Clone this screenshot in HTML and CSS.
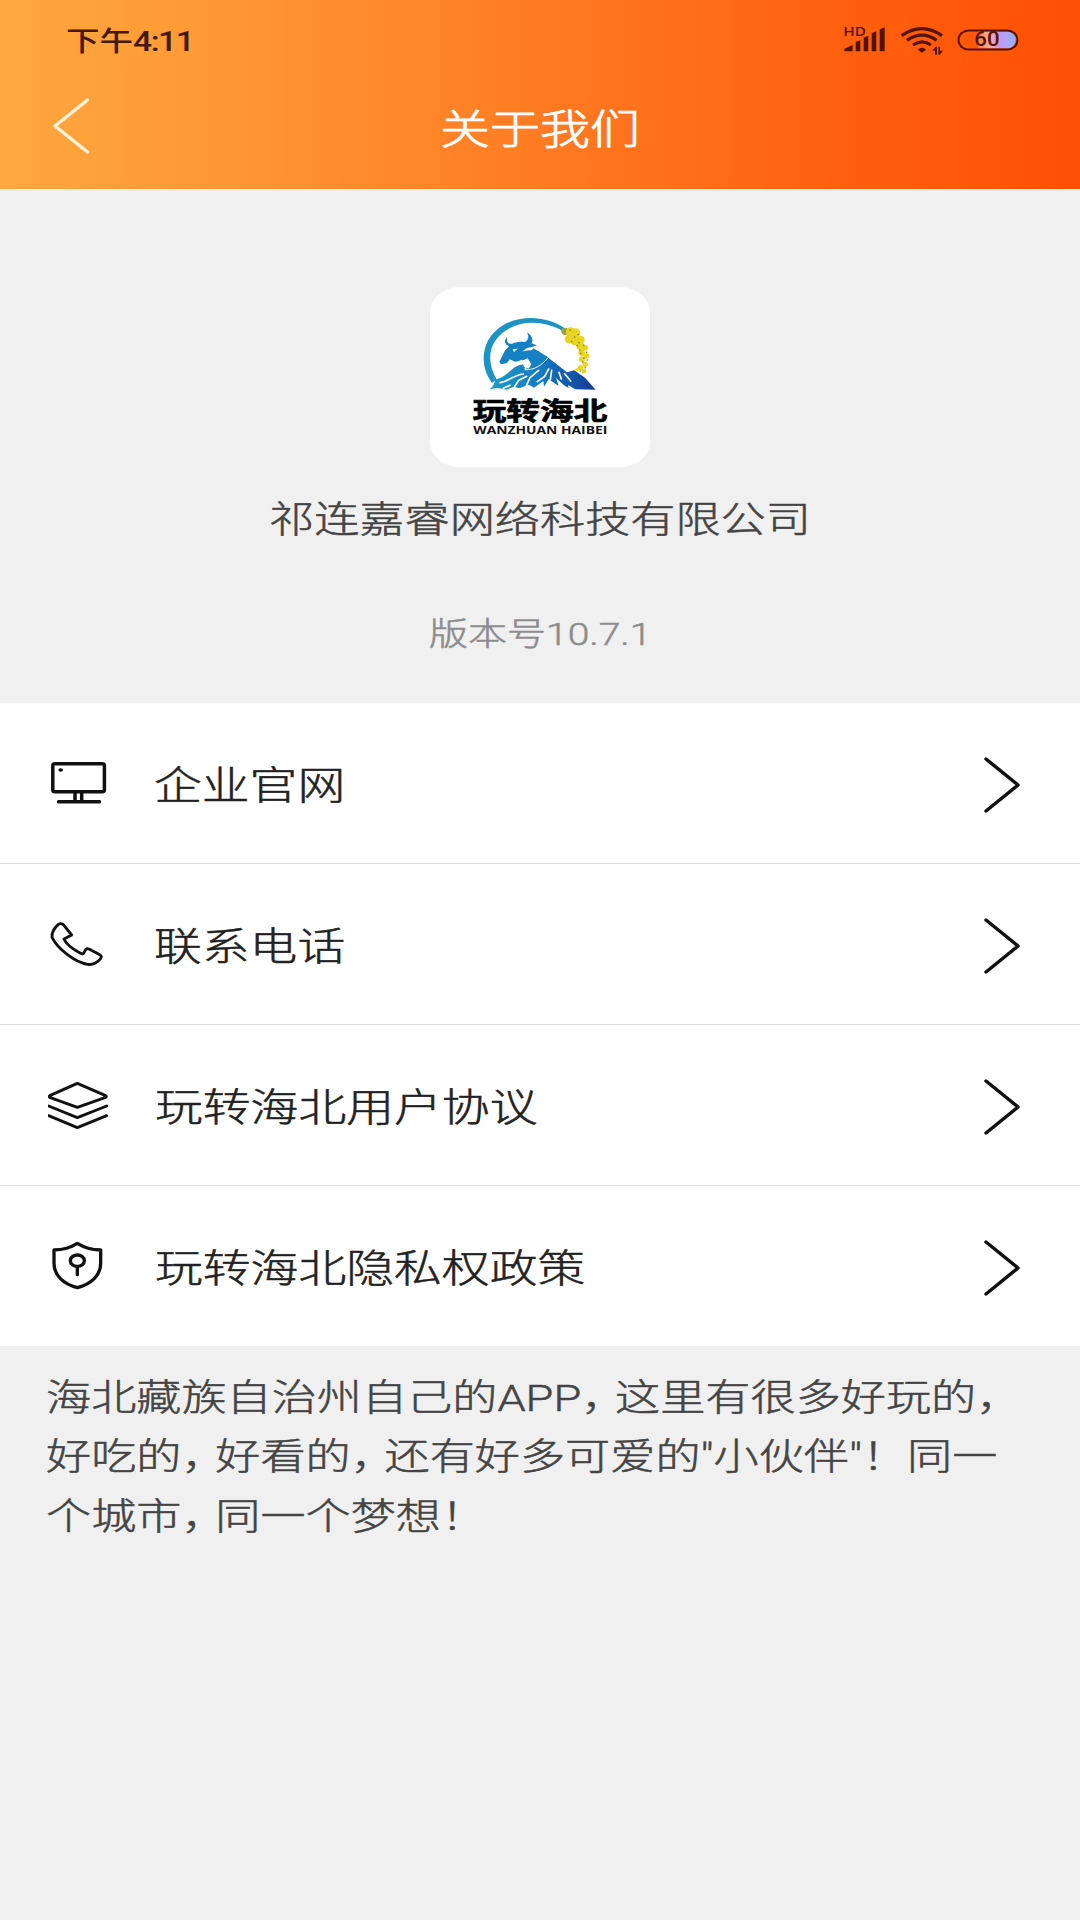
FILE: index.html
```html
<!DOCTYPE html>
<html lang="zh-CN">
<head>
<meta charset="utf-8">
<title>关于我们</title>
<link rel="stylesheet" href="styles.css">
</head>
<body>
<header class="header">
  <div class="status">
    <span class="wide time">下午<span class="clock">4:11</span></span>
    <svg class="status-icons" viewBox="130 58 530 130">
      <text class="hd" x="131" y="108" textLength="68" lengthAdjust="spacingAndGlyphs">HD</text>
      <path class="ink" d="M134 155v-8l25-11v19zM168 155v-28l14-5v33zM192 155v-41l14-6v47zM216 155v-54l14-6v60zM240 155v-66l15-6v72z"/>
      <g class="waves">
        <path d="M306 108q60-42 121 0"/>
        <path d="M322 122q44-31 89 0"/>
        <path d="M340 136q27-19 54 0"/>
      </g>
      <path class="ink" d="M354 150q13-12 26 0l-13 9zM398 153l10-12h4v24h-6v-12zM416 141h5v12h9l-9 12h-5z"/>
      <defs>
        <linearGradient id="charge">
          <stop offset="0" stop-color="#ff7d3a"/>
          <stop offset=".3" stop-color="#f7aaa2"/>
          <stop offset=".6" stop-color="#c39af0"/>
          <stop offset="1" stop-color="#8fb4ff"/>
        </linearGradient>
      </defs>
      <path fill="url(#charge)" d="M535 96h88a24 24 0 0 1 0 50h-88z"/>
      <rect class="shell" x="476.500" y="92.500" width="177" height="57" rx="30"/>
      <text class="level" x="524" y="140" textLength="76" lengthAdjust="spacingAndGlyphs">60</text>
    </svg>
  </div>
  <div class="nav">
    <svg class="back" viewBox="0 0 40 60"><path d="M35.500 4 3 30 35.500 56"/></svg>
    <h1 class="wide title">关于我们</h1>
  </div>
</header>

<section class="about">
  <svg class="logo" viewBox="30 22 660 540">
    <defs>
      <linearGradient id="sky" x1="0" x2="1">
        <stop offset="0" stop-color="#1f9cc4"/>
        <stop offset=".5" stop-color="#1478c2"/>
        <stop offset="1" stop-color="#123a94"/>
      </linearGradient>
    </defs>
    <path fill="#1e94c4" d="M216 310C176 256 186 187 232 149c55-46 142-43 200-5l-5 9c-57-31-129-34-179 6-44 36-48 88-18 140z"/>
    <path fill="#1681c2" d="M261 171c-2 17 3 23 15 21 13-6 28-6 37-5 14-5 14-17 8-29 17 12 19 23 14 33l15 6c-9 4-20 7-29 8l-15 11c19-5 34-6 49-1 14 17 25 18 31 20l-24 29-21 12-20 7c2-16-4-30-15-43-6 1-13 6-21 6l-16-7-8 11-18 4-5-8 18-35 11-11c-13-5-16-17-6-29z"/>
    <path fill="#1681c2" d="M340 206l44 26-32 34-38 14 14-22-6-28z"/>
    <path fill="url(#sky)" d="M208 329c12-7 16-20 18-30 22-3 38-20 58-36 14-8 26-11 32-9 1 7-3 12-2 14 28-4 44-14 71-34l56 44 22-6 32 22 32 36-61-1-22-13 2 9-14-8-24-22 8 24-30-20-14 22-2-17-28 20-16-9-28 11-16-5-22 9-28-5z"/>
    <path class="snow" d="M240 309c28-4 38-22 70-26M250 326l20-9M282 324l14-22 24-12M318 320l12-26 26-22M352 306l22-16 12-22M391 300l4-28M424 298l-7-20M452 304l-18-22"/>
    <path fill="#fff" d="M306 243l17-7 11 18-8 13-14-6zM278 209l15-2-11 10z"/>
    <path class="collar" d="M314 270c28 2 50-12 70-36"/>
    <g class="bloom">
      <circle cx="435" cy="155" r="11" fill="#97a53c"/>
      <circle cx="451" cy="156" r="13"/><circle cx="467" cy="160" r="14"/>
      <circle cx="447" cy="178" r="13"/><circle cx="465" cy="183" r="14"/>
      <circle cx="483" cy="180" r="11"/><circle cx="481" cy="199" r="12"/>
      <circle cx="495" cy="204" r="9"/><circle cx="485" cy="219" r="10"/>
      <circle cx="500" cy="229" r="8"/><circle cx="486" cy="239" r="9"/>
      <circle cx="496" cy="254" r="8"/><circle cx="482" cy="264" r="8"/>
      <circle cx="492" cy="274" r="7"/><circle cx="471" cy="270" r="5"/>
    </g>
    <path class="seeds" d="M449 150l3 3M462 171l4 2M475 188l4 3M490 196l3 3M481 222l4-2M499 216l2 4M487 246l3 3M497 263l-3 3M479 273l3 2M490 234l4 2M453 186l4-1M473 163l3 3M470 196l3 3M500 240l3 2M478 210l3 2"/>
    <text class="brand" x="158" y="420" textLength="404" lengthAdjust="spacingAndGlyphs">玩转海北</text>
    <text class="brand-latin" x="160" y="462" textLength="402" lengthAdjust="spacingAndGlyphs">WANZHUAN HAIBEI</text>
  </svg>
  <p class="wide company">祁连嘉睿网络科技有限公司</p>
  <p class="wide version">版本号10.7.1</p>
</section>

<nav class="menu">
  <a class="row">
    <svg class="icon" viewBox="0 0 60 60"><rect x="4.800" y="10.800" width="51.600" height="28" rx="2"/><path d="M27 40v8M33.700 40v8M10.500 48.700h41"/><ellipse class="dot" cx="12.700" cy="17" rx="2.300" ry="1.800"/></svg>
    <span class="wide label">企业官网</span>
    <svg class="chevron" viewBox="0 0 40 60"><path d="M4 4 36 30 4 56"/></svg>
  </a>
  <a class="row">
    <svg class="icon" viewBox="54 42 180 180"><path class="fine" d="M85 73q8-5 15 1l25 31-23 12c5 12 22 28 48 42 7 4 10 4 12-1l5-9q3-4 10-2l34 18q5 4 1 11-17 20-39 17C136 187 84 148 66 112q-2-20 19-39z"/></svg>
    <span class="wide label">联系电话</span>
    <svg class="chevron" viewBox="0 0 40 60"><path d="M4 4 36 30 4 56"/></svg>
  </a>
  <a class="row">
    <svg class="icon" viewBox="54 525 180 180"><path class="fine" d="M142 550 59 587q-3 3 0 5l83 30 85-30q4-2 0-5zM56 618l86 35 88-35M56 647l86 36 88-36"/></svg>
    <span class="wide label long">玩转海北用户协议</span>
    <svg class="chevron" viewBox="0 0 40 60"><path d="M4 4 36 30 4 56"/></svg>
  </a>
  <a class="row">
    <svg class="icon" viewBox="54 48 180 180"><path class="bold" d="M142 70q30 19 70 20v40c0 36-28 62-70 73-42-11-70-37-70-73V90q40-1 70-20zM142 140v24"/><ellipse class="bold" cx="142" cy="122" rx="21" ry="17"/></svg>
    <span class="wide label long">玩转海北隐私权政策</span>
    <svg class="chevron" viewBox="0 0 40 60"><path d="M4 4 36 30 4 56"/></svg>
  </a>
</nav>

<p class="wide intro">海北藏族自治州自己的APP<span class="comma">，</span>这里有很多好玩的<span class="comma">，</span><br>好吃的<span class="comma">，</span>好看的<span class="comma">，</span>还有好多可爱的"小伙伴"！同一<br>个城市<span class="comma">，</span>同一个梦想！</p>
</body>
</html>
```
FILE: styles.css
```css
* { box-sizing: border-box; }

body {
  margin: 0;
  min-height: 1920px;
  background: #f0f0f0;
  color: #222;
  font-family: Roboto, "Noto Sans CJK SC", sans-serif;
  font-weight: 300;
}

p, h1 { margin: 0; font-weight: inherit; }
svg { display: block; flex: none; }

/* Lettering is wider than it is tall throughout the interface */
.wide {
  transform: scaleX(1.22);
  transform-origin: left center;
  white-space: nowrap;
  -webkit-text-stroke: .5px currentColor;
}

.header {
  height: 189px;
  background: linear-gradient(90deg, #ffa840 0%, #ff9430 25%, #ff7b22 50%, #ff610f 77%, #ff5003 100%);
}

.status {
  height: 82px;
  padding: 0 60px 0 66px;
  display: flex;
  align-items: center;
  justify-content: space-between;
}

.time { margin-bottom: 4px; color: #431a04; font-size: 27.500px; font-weight: 500; -webkit-text-stroke: 0; }
.clock { letter-spacing: -1.200px; }
.status-icons { width: 176.660px; height: 43.330px; }
.ink, .hd, .level { fill: #541400; }
.hd { font: 600 36px "Open Sans", sans-serif; }
.level { font: 500 60px Roboto, sans-serif; }
.waves { fill: none; stroke: #541400; stroke-width: 10; }
.shell { fill: none; stroke: #541400; stroke-width: 6; }

.nav {
  height: 94px;
  padding: 0 52px;
  display: grid;
  grid-template-columns: 40px 1fr 40px;
  align-items: center;
}

.back { width: 40px; height: 60px; margin-top: -6px; }
.back path { fill: none; stroke: #fff3d8; stroke-width: 3.500; stroke-linecap: round; stroke-linejoin: round; }
.title { justify-self: center; margin-bottom: 7px; transform-origin: center; color: #fff; font-size: 41px; -webkit-text-stroke-width: .8px; }

.about {
  height: 514px;
  padding-top: 98px;
  display: flex;
  flex-direction: column;
  align-items: center;
}

.about .wide { transform-origin: center; }
.logo { width: 220px; height: 180px; border-radius: 30px / 25px; background: #fff; }
.brand { fill: #000; stroke: #000; stroke-width: 2; font: 700 76px "Noto Sans CJK SC", sans-serif; }
.brand-latin { fill: #111; font: 700 29px "Open Sans", sans-serif; }
.snow { fill: none; stroke: #fff; stroke-width: 5; stroke-linecap: round; }
.collar { fill: none; stroke: #fff; stroke-width: 3; }
.bloom { fill: #e9d51f; }
.seeds { stroke: #90811b; stroke-width: 4; }
.company { margin-top: 27px; color: #444; font-size: 37px; line-height: 54px; }
.version { margin-top: 62px; color: #8c8c8c; font-size: 32px; line-height: 48px; }

.menu { background: #fff; }

.row {
  height: 161px;
  padding: 0 58px 0 48px;
  display: flex;
  align-items: center;
  border-bottom: 1px solid #dedede;
}

.row:last-child { height: 160px; border-bottom: 0; }
.icon { width: 60px; height: 60px; fill: none; stroke: #111; stroke-width: 3.500; stroke-linecap: round; stroke-linejoin: round; }
.icon .fine { stroke-width: 8.500; }
.icon .bold { stroke-width: 10; }
.icon .dot { fill: #111; stroke: none; }
.label { margin: 5px 0 0 46px; font-size: 39.200px; line-height: 58px; }
.long { margin-left: 47px; }
.chevron { width: 40px; height: 60px; margin-left: auto; position: relative; top: 2px; }
.chevron path { fill: none; stroke: #111; stroke-width: 3.500; stroke-linecap: round; stroke-linejoin: round; }

.intro {
  width: max-content;
  margin: 23px 0 0 46px;
  color: #444;
  font-size: 37px;
  line-height: 59.300px;
}

/* Half-width comma followed by a quarter em of air */
.comma { margin-right: .25em; font-feature-settings: "halt"; }
```
